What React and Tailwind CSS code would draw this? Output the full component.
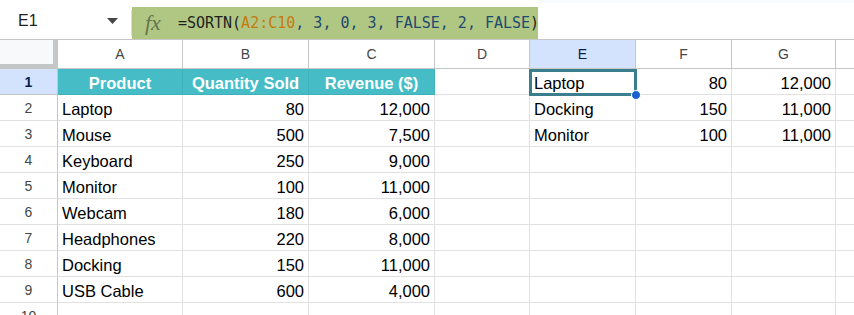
import React from "react";

const COLS = [
  { l: "A", w: 125 },
  { l: "B", w: 126 },
  { l: "C", w: 126 },
  { l: "D", w: 95 },
  { l: "E", w: 106 },
  { l: "F", w: 96 },
  { l: "G", w: 104 },
  { l: "", w: 60 },
];

const DATA = [
  ["Product", "Quantity Sold", "Revenue ($)", "", "Laptop", "80", "12,000", ""],
  ["Laptop", "80", "12,000", "", "Docking", "150", "11,000", ""],
  ["Mouse", "500", "7,500", "", "Monitor", "100", "11,000", ""],
  ["Keyboard", "250", "9,000", "", "", "", "", ""],
  ["Monitor", "100", "11,000", "", "", "", "", ""],
  ["Webcam", "180", "6,000", "", "", "", "", ""],
  ["Headphones", "220", "8,000", "", "", "", "", ""],
  ["Docking", "150", "11,000", "", "", "", "", ""],
  ["USB Cable", "600", "4,000", "", "", "", "", ""],
  ["", "", "", "", "", "", "", ""],
];

const isNum = (s) => /^[0-9,]+$/.test(s);

export default function App() {
  return (
    <div
      className="w-[854px] h-[315px] overflow-hidden bg-white text-[#1f1f1f]"
      style={{ fontFamily: '"Liberation Sans", Arial, sans-serif' }}
    >
      {/* formula bar */}
      <div className="flex h-[39px]">
        <div className="w-[132px] shrink-0 flex items-center pt-[2px] relative">
          <span className="ml-[18px] text-[16px] text-[#1f1f1f]">E1</span>
          <svg className="absolute left-[107px] top-[18px]" width="11" height="6" viewBox="0 0 11 6">
            <path d="M0 0 L11 0 L5.5 6 Z" fill="#444746" />
          </svg>
          <div className="absolute right-0 top-[10px] h-[26px] w-px bg-[#dadce0]" />
        </div>
        <div className="mt-[7px] w-[406px] shrink-0 h-[32px] bg-[#b0c784] flex items-center">
          <span
            className="ml-[13px] text-[#65754f] text-[22px] italic leading-none"
            style={{ fontFamily: '"Liberation Serif", "DejaVu Serif", serif' }}
          >
            fx
          </span>
          <span
            className="ml-[17px] text-[15px] whitespace-pre"
            style={{ fontFamily: '"DejaVu Sans Mono", "Liberation Mono", monospace' }}
          >
            <span className="text-[#1f1f1f]">=SORTN(</span>
            <span className="text-[#c47a12]">A2:C10</span>
            <span className="text-[#1d4a70]">, 3, 0, 3, FALSE, 2, FALSE</span>
            <span className="text-[#1f1f1f]">)</span>
          </span>
        </div>
        <div className="flex-1">
          <div className="h-[3px] bg-[#f8fafd]" />
        </div>
      </div>

      {/* column headers */}
      <div className="flex h-[30px] border-t border-b border-[#c4c7c5]">
        <div className="w-[58px] shrink-0 h-full bg-[#f8f9fa] border-r-[5px] border-b-[4px] border-[#c4c7c5]" />
        {COLS.map((c, i) => (
          <div
            key={i}
            style={{ width: c.w }}
            className={`h-full shrink-0 flex items-center justify-center pt-[1px] border-r border-[#c4c7c5] text-[14px] ${
              c.l === "E" ? "bg-[#d3e3fd] text-[#0b1c49]" : "text-[#444746]"
            }`}
          >
            {c.l}
          </div>
        ))}
      </div>

      {/* rows */}
      {DATA.map((row, r) => (
        <div key={r} className="flex h-[26px]">
          <div
            className={`w-[58px] h-full shrink-0 flex items-center justify-center pt-[2px] border-r border-b border-[#c4c7c5] text-[14px] ${
              r === 0 ? "bg-[#d3e3fd] font-bold text-[#0b1c49]" : "text-[#444746] border-b-[#e1e1e1]"
            }`}
          >
            {r + 1}
          </div>
          {row.map((v, c) => {
            const header = r === 0 && c < 3;
            const selected = r === 0 && c === 4;
            return (
              <div
                key={c}
                style={{ width: COLS[c].w }}
                className={`h-full shrink-0 flex items-center pt-[4px] px-[4px] text-[16.5px] whitespace-nowrap border-r border-b ${
                  selected ? "relative z-10 " : ""
                }${
                  header
                    ? "bg-[#46bdc6] border-[#3fb1b9] text-white font-bold justify-center"
                    : "border-[#e1e1e1] text-black " + (isNum(v) ? "justify-end" : "justify-start")
                }`}
              >
                {v}
                {selected && (
                  <>
                    <div className="absolute left-[-1px] top-[0px] w-[108px] h-[27px] border-[3px] border-[#3b7f8f]" />
                    <div className="absolute left-[101px] top-[21px] w-[10px] h-[10px] rounded-full bg-[#1a5fd0] border border-white" />
                  </>
                )}
              </div>
            );
          })}
        </div>
      ))}
    </div>
  );
}
